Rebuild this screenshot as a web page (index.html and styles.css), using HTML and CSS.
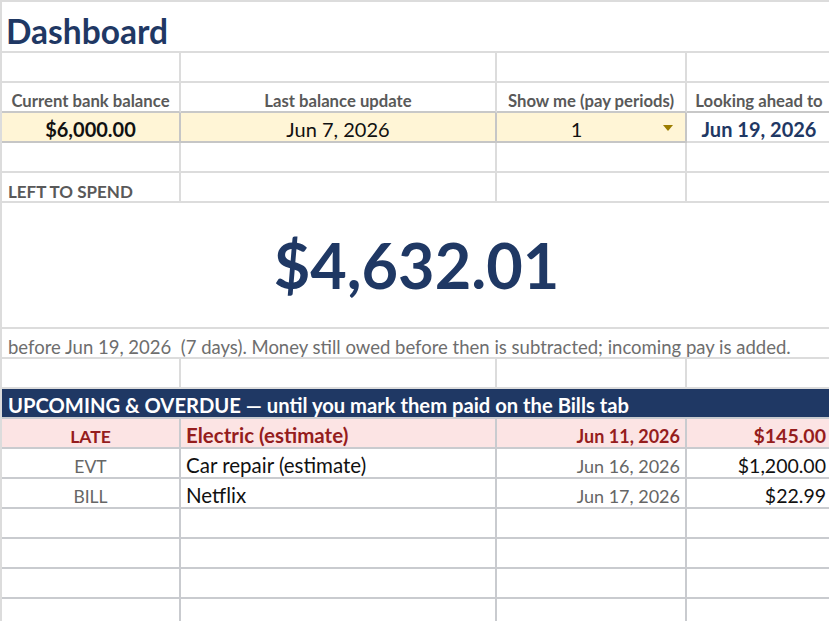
FILE: index.html
```html
<!DOCTYPE html>
<html lang="en">
<head>
    <meta charset="UTF-8">
    <meta name="viewport" content="width=device-width, initial-scale=1.0">
    <title>Dashboard</title>
    <link rel="stylesheet" href="styles.css">
</head>
<body>
    <div class="sheet">
        <!-- title -->
        <div class="cell span-all title">Dashboard</div>

        <div class="cell"></div><div class="cell"></div><div class="cell"></div><div class="cell"></div>

        <!-- inputs -->
        <div class="cell label">Current bank balance</div>
        <div class="cell label">Last balance update</div>
        <div class="cell label">Show me (pay periods)</div>
        <div class="cell label">Looking ahead to</div>

        <div class="cell input center strong">$6,000.00</div>
        <div class="cell input center">Jun 7, 2026</div>
        <div class="cell input center dropdown">1<span class="caret"></span></div>
        <div class="cell value center strong navy-text">Jun 19, 2026</div>

        <div class="cell"></div><div class="cell"></div><div class="cell"></div><div class="cell"></div>

        <!-- left to spend -->
        <div class="cell section-label">LEFT TO SPEND</div>
        <div class="cell"></div><div class="cell"></div><div class="cell"></div>

        <div class="cell span-all big-number">$4,632.01</div>
        <div class="cell span-all note">before Jun 19, 2026&nbsp; (7 days). Money still owed before then is subtracted; incoming pay is added.</div>

        <div class="cell"></div><div class="cell"></div><div class="cell"></div><div class="cell"></div>

        <!-- upcoming -->
        <div class="cell span-all band">UPCOMING &amp; OVERDUE — until you mark them paid on the Bills tab</div>

        <div class="cell row late center kind">LATE</div>
        <div class="cell row late name">Electric (estimate)</div>
        <div class="cell row late right date">Jun 11, 2026</div>
        <div class="cell row late right amount">$145.00</div>

        <div class="cell row center kind muted">EVT</div>
        <div class="cell row name">Car repair (estimate)</div>
        <div class="cell row right date muted">Jun 16, 2026</div>
        <div class="cell row right amount">$1,200.00</div>

        <div class="cell row center kind muted">BILL</div>
        <div class="cell row name">Netflix</div>
        <div class="cell row right date muted">Jun 17, 2026</div>
        <div class="cell row right amount">$22.99</div>

        <div class="cell row"></div><div class="cell row"></div><div class="cell row"></div><div class="cell row"></div>
        <div class="cell row"></div><div class="cell row"></div><div class="cell row"></div><div class="cell row"></div>
        <div class="cell row"></div><div class="cell row"></div><div class="cell row"></div><div class="cell row"></div>
        <div class="cell row"></div><div class="cell row"></div><div class="cell row"></div><div class="cell row"></div>
    </div>
</body>
</html>
```

FILE: styles.css
```css
body {
    margin: 0;
    background-color: #ffffff;
    font-family: Lato, "Open Sans", sans-serif;
    color: #111111;
    overflow: hidden;
}
.sheet {
    display: grid;
    grid-template-columns: 179px 316px 190px 146px;
    grid-template-rows: 51px repeat(5, 30px) 126px repeat(10, 30px);
    width: 831px;
    border-top: 2px solid #dcdcdc;
    border-left: 2px solid #dcdcdc;
}
.cell {
    box-sizing: border-box;
    display: flex;
    align-items: flex-end;
    padding: 0 5px 2px;
    border-right: 2px solid #dcdcdc;
    border-bottom: 2px solid #dcdcdc;
    white-space: nowrap;
    font-size: 19px;
    line-height: 1;
    position: relative;
}
.span-all {
    grid-column: 1 / -1;
}
.center {
    justify-content: center;
}
.right {
    justify-content: flex-end;
}
.strong {
    font-weight: 700;
}
.title {
    font-size: 33.5px;
    font-weight: 700;
    color: #1f3864;
    padding-left: 4px;
    padding-bottom: 3px;
}
.label {
    justify-content: center;
    font-size: 16.7px;
    font-weight: 700;
    color: #595959;
    padding-bottom: 1px;
    border-bottom-color: #c8c8c8;
}
.input,
.value {
    font-size: 20px;
    padding-bottom: 2px;
}
.input {
    background-color: #fff5d6;
    border-color: #c6c6c6;
}
.navy-text {
    color: #1f3864;
}
.dropdown {
    padding-right: 34px;
}
.dropdown .caret {
    position: absolute;
    right: 12px;
    top: 12px;
    border-left: 5px solid transparent;
    border-right: 5px solid transparent;
    border-top: 6px solid #9c7d00;
}
.section-label {
    font-size: 17px;
    font-weight: 700;
    color: #595959;
    padding-left: 6px;
    padding-bottom: 1px;
}
.big-number {
    align-items: center;
    justify-content: center;
    font-size: 63px;
    font-weight: 700;
    color: #1f3864;
    padding: 0 0 2px;
}
.note {
    font-size: 18.5px;
    color: #6e6e6e;
    padding-left: 6px;
    padding-bottom: 1px;
}
.band {
    background-color: #1f3864;
    color: #ffffff;
    font-size: 20.2px;
    font-weight: 700;
    padding-left: 6px;
    padding-bottom: 2px;
    border-bottom-color: #c9cbcf;
}
.row {
    border-color: #c9cbcf;
    padding-bottom: 2px;
}
.late {
    background-color: #fce4e4;
    color: #951d1d;
    font-weight: 700;
}
.kind {
    font-size: 17.5px;
}
.name {
    font-size: 20.5px;
}
.date {
    font-size: 18px;
}
.amount {
    font-size: 19.5px;
}
.muted {
    color: #666666;
}
```
